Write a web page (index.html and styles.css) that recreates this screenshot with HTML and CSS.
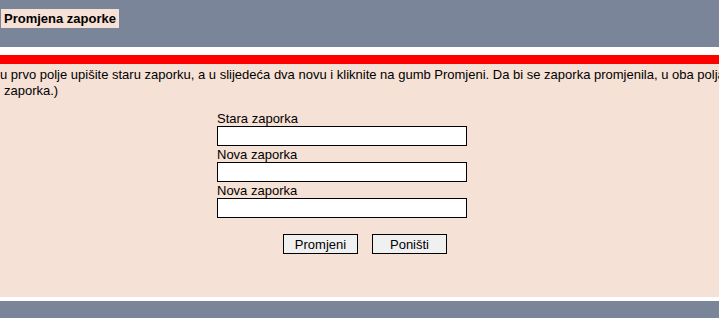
FILE: index.html
```html
<!DOCTYPE html>
<html lang="hr">
<head>
<meta charset="utf-8">
<title>Promjena zaporke</title>
<link rel="stylesheet" href="styles.css">
</head>
<body>
<div class="header">
  <span class="title">Promjena zaporke</span>
</div>
<div class="sep"></div>
<div class="redbar"></div>
<div class="content">
  <div class="note">
    <div class="line">u prvo polje upišite staru zaporku, a u slijedeća dva novu i kliknite na gumb Promjeni. Da bi se zaporka promjenila, u oba polja mora biti upisana ista zaporka.</div>
    <div class="line line2">zaporka.)</div>
  </div>
  <form class="form">
    <label class="lbl">Stara zaporka</label>
    <input class="field" type="password">
    <label class="lbl">Nova zaporka</label>
    <input class="field" type="password">
    <label class="lbl">Nova zaporka</label>
    <input class="field" type="password">
    <div class="buttons">
      <button type="button" class="btn">Promjeni</button>
      <button type="reset" class="btn">Poništi</button>
    </div>
  </form>
</div>
<div class="sep2"></div>
<div class="footer"></div>
</body>
</html>
```
FILE: styles.css
```css
html, body {
  margin: 0;
  padding: 0;
  background: #ffffff;
  font-family: "Liberation Sans", Arial, sans-serif;
  font-size: 13px;
  color: #000;
  overflow: hidden;
}
.header {
  background: #7b8599;
  height: 47px;
  box-sizing: border-box;
  padding: 9px 0 0 1px;
}
.title {
  display: inline-block;
  background: #f5e1d5;
  font-weight: bold;
  font-size: 13px;
  line-height: 15px;
  padding: 2px 3px 2px 3px;
}
.sep {
  height: 8px;
  background: #fff;
}
.redbar {
  height: 9px;
  background: #ff0000;
}
.content {
  background: #f5e1d5;
  height: 233px;
  box-sizing: border-box;
  padding-top: 3px;
  overflow: hidden;
}
.note {
  white-space: nowrap;
  line-height: 16px;
}
.line2 {
  padding-left: 4px;
}
.form {
  display: flex;
  flex-direction: column;
  align-items: flex-start;
  margin: 11px 0 0 217px;
  width: 250px;
}
.lbl {
  display: block;
  line-height: 15px;
  height: 15px;
  margin-top: 1px;
}
.field {
  display: block;
  box-sizing: border-box;
  width: 250px;
  height: 20px;
  margin: 0;
  border: 1px solid #000;
  background: #fff;
  padding: 0 2px;
  font: 13px "Liberation Sans", Arial, sans-serif;
}
.buttons {
  display: flex;
  gap: 14px;
  margin: 16px 0 0 66px;
}
.btn {
  box-sizing: border-box;
  width: 75px;
  height: 20px;
  margin: 0;
  padding: 0;
  border: 1px solid #000;
  background: #f0f0f0;
  font: 13px "Liberation Sans", Arial, sans-serif;
  color: #000;
}
.sep2 {
  height: 4px;
  background: #fff;
}
.footer {
  height: 17px;
  background: #7b8599;
}
```
